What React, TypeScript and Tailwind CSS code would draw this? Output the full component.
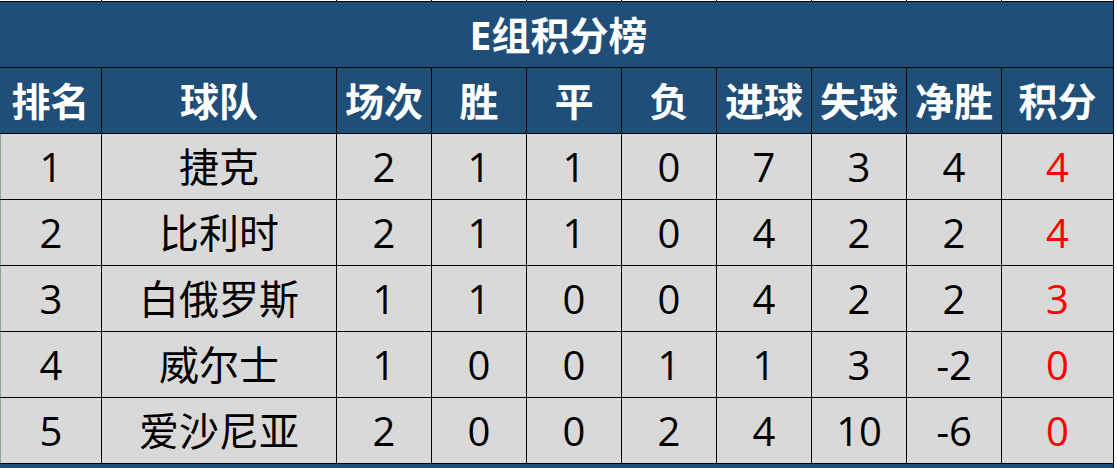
import React from "react";

const headers = ["排名", "球队", "场次", "胜", "平", "负", "进球", "失球", "净胜", "积分"];
const rows: (string | number)[][] = [
  [1, "捷克", 2, 1, 1, 0, 7, 3, 4, 4],
  [2, "比利时", 2, 1, 1, 0, 4, 2, 2, 4],
  [3, "白俄罗斯", 1, 1, 0, 0, 4, 2, 2, 3],
  [4, "威尔士", 1, 0, 0, 1, 1, 3, -2, 0],
  [5, "爱沙尼亚", 2, 0, 0, 2, 4, 10, -6, 0],
];

const font = { fontFamily: '"Open Sans", "Noto Sans CJK SC", sans-serif' };

export default function App() {
  return (
    <div className="w-[1117px] h-[468px] bg-white overflow-hidden" style={font}>
      <div className="w-[1114px] grid grid-cols-[101px_234px_94px_94px_94px_94px_94px_94px_94px_111px] grid-rows-[1px_65px_65px_65px_65px_65px_65px_65px_4px] gap-px bg-black pr-px">
        {headers.map((_, i) => (
          <div key={"s" + i} className="bg-white" />
        ))}
        <div className="col-span-10 bg-[#1f4e79] flex items-center justify-center text-white font-bold text-[39px] leading-none pl-1">
          E组积分榜
        </div>
        {headers.map((h) => (
          <div
            key={h}
            className="bg-[#1f4e79] flex items-center justify-center text-white font-bold text-[39px] leading-none"
          >
            {h}
          </div>
        ))}
        {rows.map((r, ri) =>
          r.map((c, ci) => (
            <div
              key={ri + "-" + ci}
              className={
                "bg-[#d9d9d9] flex items-center justify-center text-[40px] leading-none " +
                (ci === 9 ? "text-[#ff0000]" : "text-black") +
                (ci === 0 ? " border-l border-[#86a98f]" : "")
              }
            >
              {c}
            </div>
          ))
        )}
        <div className="col-span-10 bg-[#1f4e79]" />
      </div>
    </div>
  );
}
